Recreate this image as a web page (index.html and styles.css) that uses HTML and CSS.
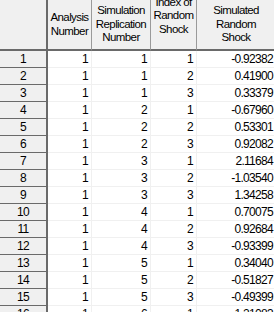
FILE: index.html
```html
<!DOCTYPE html>
<html>
<head>
<meta charset="utf-8">
<link rel="stylesheet" href="styles.css">
</head>
<body>
<table class="grid">
  <colgroup>
    <col class="c-row"><col class="c-an"><col class="c-rep"><col class="c-idx"><col class="c-val">
  </colgroup>
  <thead>
    <tr>
      <th class="corner"></th>
      <th class="hd"><div class="hd-txt">Analysis<br>Number</div></th>
      <th class="hd"><div class="hd-txt">Simulation<br>Replication<br>Number</div></th>
      <th class="hd"><div class="hd-txt hd-up">Index of<br>Random<br>Shock</div></th>
      <th class="hd hd-last"><div class="hd-txt">Simulated<br>Random<br>Shock</div></th>
    </tr>
  </thead>
  <tbody>
    <tr><th class="rh">1</th><td>1</td><td>1</td><td>1</td><td>-0.92382</td></tr>
    <tr><th class="rh">2</th><td>1</td><td>1</td><td>2</td><td>0.41900</td></tr>
    <tr><th class="rh">3</th><td>1</td><td>1</td><td>3</td><td>0.33379</td></tr>
    <tr><th class="rh">4</th><td>1</td><td>2</td><td>1</td><td>-0.67960</td></tr>
    <tr><th class="rh">5</th><td>1</td><td>2</td><td>2</td><td>0.53301</td></tr>
    <tr><th class="rh">6</th><td>1</td><td>2</td><td>3</td><td>0.92082</td></tr>
    <tr><th class="rh">7</th><td>1</td><td>3</td><td>1</td><td>2.11684</td></tr>
    <tr><th class="rh">8</th><td>1</td><td>3</td><td>2</td><td>-1.03540</td></tr>
    <tr><th class="rh">9</th><td>1</td><td>3</td><td>3</td><td>1.34258</td></tr>
    <tr><th class="rh">10</th><td>1</td><td>4</td><td>1</td><td>0.70075</td></tr>
    <tr><th class="rh">11</th><td>1</td><td>4</td><td>2</td><td>0.92684</td></tr>
    <tr><th class="rh">12</th><td>1</td><td>4</td><td>3</td><td>-0.93399</td></tr>
    <tr><th class="rh">13</th><td>1</td><td>5</td><td>1</td><td>0.34040</td></tr>
    <tr><th class="rh">14</th><td>1</td><td>5</td><td>2</td><td>-0.51827</td></tr>
    <tr><th class="rh">15</th><td>1</td><td>5</td><td>3</td><td>-0.49399</td></tr>
    <tr><th class="rh">16</th><td>1</td><td>6</td><td>1</td><td>1.21083</td></tr>
  </tbody>
</table>
</body>
</html>
```
FILE: styles.css
```css
html, body {
  margin: 0;
  padding: 0;
  background: #ffffff;
  overflow: hidden;
}
.grid {
  border-collapse: separate;
  border-spacing: 0;
  table-layout: fixed;
  width: 275px;
  font-family: "Liberation Sans", Arial, sans-serif;
  font-size: 12px;
  letter-spacing: -0.7px;
  color: #000;
}
.c-row { width: 48px; }
.c-an { width: 44px; }
.c-rep { width: 59px; }
.c-idx { width: 46px; }
.c-val { width: 78px; }
.grid th, .grid td {
  padding: 0;
  box-sizing: border-box;
  white-space: nowrap;
  font-weight: normal;
}
.corner {
  height: 51px;
  background: #f0f0f0;
  border-right: 2px solid #6a6a6a;
  border-bottom: 2px solid #6a6a6a;
}
.hd {
  height: 51px;
  background: #f0f0f0;
  border-right: 1px solid #9a9a9a;
  border-bottom: 2px solid #6a6a6a;
  padding-bottom: 3px;
  text-align: center;
  vertical-align: middle;
  font-size: 11.5px;
  letter-spacing: -0.6px;
  line-height: 13.5px;
}
.hd-txt {
  display: block;
}
.hd-up {
  margin-top: -17px;
}
.hd-last {
  border-right: none;
}
.rh {
  height: 17px;
  background: #f0f0f0;
  border-right: 2px solid #6a6a6a;
  border-bottom: 1px solid #6a6a6a;
  text-align: center;
  padding-right: 4px;
  line-height: 16px;
}
.grid td {
  height: 17px;
  border-right: 1px solid #f0f0f0;
  border-bottom: 1px solid #f0f0f0;
  text-align: right;
  padding-right: 3px;
  line-height: 16px;
}
.grid td:last-child {
  border-right: none;
  padding-right: 2px;
}
```
